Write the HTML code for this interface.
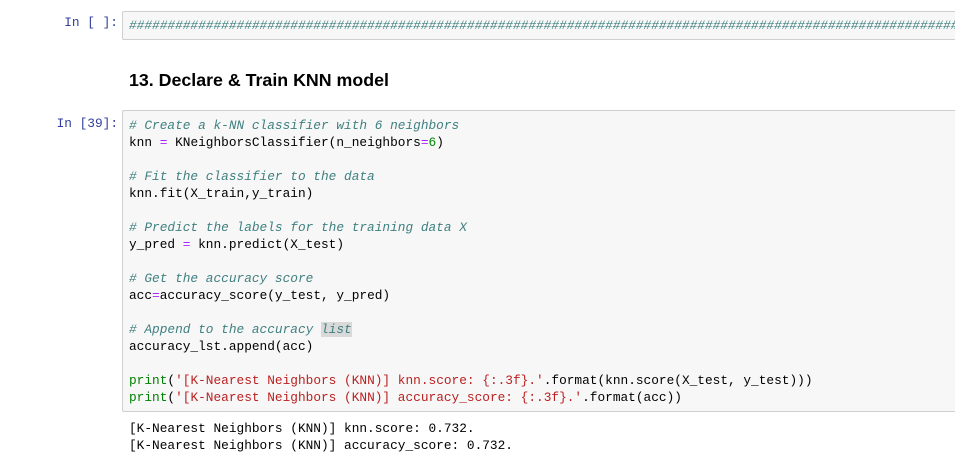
<!DOCTYPE html><html><head><style>
body{margin:0;width:955px;height:470px;background:#fff;overflow:hidden;position:relative;font-family:"Liberation Mono",monospace;font-size:12.8px}
.p{position:absolute;color:#303f9f;text-align:right;width:118px;left:0}
.box{position:absolute;left:122px;width:850px;background:#f7f7f7;border:1px solid #cfcfcf;border-radius:2px;overflow:hidden}
pre{margin:0;font:inherit;line-height:17px;white-space:pre}
.c{color:#408080;font-style:italic}
.o{color:#aa22ff}.n{color:#080}.s{color:#ba2121}.b{color:#008000}
.hl{background:#d9d9d9}
</style></head><body>
<div class="p" style="top:15px">In [ ]:</div>
<div class="box" style="top:11px;height:27px"><pre class="c" style="position:absolute;left:6px;top:5px">########################################################################################################################</pre></div>
<div style="position:absolute;left:129px;top:70px;font-family:'Liberation Sans',sans-serif;font-weight:bold;font-size:17.8px;color:#000">13. Declare &amp; Train KNN model</div>
<div class="p" style="top:116px">In [39]:</div>
<div class="box" style="top:110px;height:300px"><pre style="position:absolute;left:6px;top:6px;color:#000"><span class="c"># Create a k-NN classifier with 6 neighbors</span>
knn <span class="o">=</span> KNeighborsClassifier(n_neighbors<span class="o">=</span><span class="n">6</span>)

<span class="c"># Fit the classifier to the data</span>
knn.fit(X_train,y_train)

<span class="c"># Predict the labels for the training data X</span>
y_pred <span class="o">=</span> knn.predict(X_test)

<span class="c"># Get the accuracy score</span>
acc<span class="o">=</span>accuracy_score(y_test, y_pred)

<span class="c"># Append to the accuracy <span class="hl">list</span></span>
accuracy_lst.append(acc)

<span class="b">print</span>(<span class="s">'[K-Nearest Neighbors (KNN)] knn.score: {:.3f}.'</span>.format(knn.score(X_test, y_test)))
<span class="b">print</span>(<span class="s">'[K-Nearest Neighbors (KNN)] accuracy_score: {:.3f}.'</span>.format(acc))</pre></div>
<pre style="position:absolute;left:129px;top:420px;color:#000">[K-Nearest Neighbors (KNN)] knn.score: 0.732.
[K-Nearest Neighbors (KNN)] accuracy_score: 0.732.</pre>
</body></html>
